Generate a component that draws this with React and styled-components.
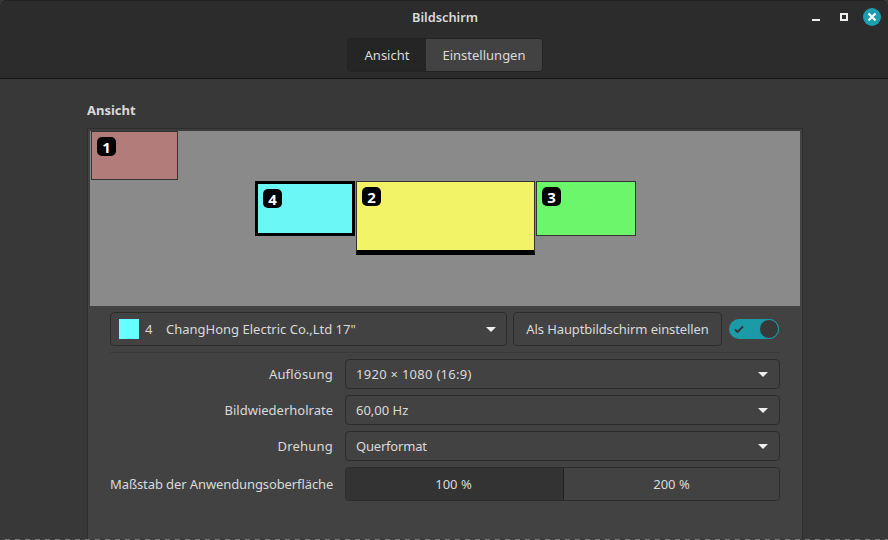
import React from 'react';
import styled, { createGlobalStyle } from 'styled-components';

const GlobalStyle = createGlobalStyle`
  html, body {
    margin: 0;
    padding: 0;
    background: #383838;
  }
  * {
    box-sizing: border-box;
  }
`;

const Window = styled.div`
  position: relative;
  width: 888px;
  height: 540px;
  overflow: hidden;
  display: flex;
  flex-direction: column;
  background: #383838;
  color: #dadada;
  font-family: 'Noto Sans', 'Open Sans', sans-serif;
  font-size: 13px;
`;

const Header = styled.header`
  position: relative;
  flex: none;
  height: 79px;
  display: flex;
  flex-direction: column;
  align-items: center;
  padding: 8px 0 0 2px;
  background: #2c2c2c;
  border-top: 1px solid #222;
  border-bottom: 1px solid #151515;
  border-radius: 7px 7px 0 0;
`;

const Title = styled.div`
  height: 16px;
  line-height: 16px;
  font-weight: 600;
  font-size: 12.8px;
`;

const StackSwitcher = styled.div`
  display: flex;
  height: 34px;
  margin-top: 13px;
  border: 1px solid #232323;
  border-radius: 4px;
  overflow: hidden;
`;

const StackTab = styled.div`
  display: flex;
  align-items: center;
  justify-content: center;
  width: ${({ width }) => width}px;
  background: ${({ active }) => (active ? '#252525' : '#424242')};
`;

const WindowControls = styled.div`
  position: absolute;
  top: 7px;
  right: 7px;
  display: flex;
  align-items: center;
  gap: 10px;
`;

const WindowButton = styled.div`
  width: 18px;
  height: 18px;
  display: flex;
  align-items: center;
  justify-content: center;
  border-radius: 50%;
  background: ${({ close }) => (close ? '#1b9fb0' : 'transparent')};
`;

const Body = styled.main`
  flex: 1;
  padding: 22px 85px 0 87px;
`;

const SectionTitle = styled.div`
  height: 18px;
  line-height: 18px;
  font-weight: 700;
  font-size: 13px;
  margin-bottom: 9px;
`;

const Frame = styled.div`
  height: 412px;
  border: 1px solid #2e2e2e;
  border-bottom: none;
  background: #424242;
  display: flex;
  flex-direction: column;
`;

const Preview = styled.div`
  position: relative;
  flex: none;
  height: 177px;
  margin: 0 2px;
  border-top: 2px solid #3c3c3c;
  background: #8a8a8a;
`;

const Monitor = styled.div`
  position: absolute;
  left: ${({ x }) => x}px;
  top: ${({ y }) => y}px;
  width: ${({ w }) => w}px;
  height: ${({ h }) => h}px;
  background: ${({ color }) => color};
  border: 1px solid #333;
  ${({ selected }) => selected && 'border: 3px solid #000;'}
  ${({ primary }) => primary && 'border-bottom: 5px solid #000;'}
`;

const Badge = styled.div`
  position: absolute;
  left: 5px;
  top: 5px;
  width: 19px;
  height: 19px;
  display: flex;
  align-items: center;
  justify-content: center;
  border-radius: 5px;
  background: #000;
  color: #fff;
  font-weight: 700;
  font-size: 15px;
`;

const Controls = styled.div`
  padding: 6px 22px 0;
`;

const TopRow = styled.div`
  display: flex;
  align-items: center;
  height: 34px;
`;

const ComboBase = styled.div`
  display: flex;
  align-items: center;
  justify-content: space-between;
  border: 1px solid #2c2c2c;
  border-radius: 4px;
  background: #424242;
`;

const MonitorCombo = styled(ComboBase)`
  width: 397px;
  height: 34px;
  padding: 0 10px 0 8px;
`;

const MonitorInfo = styled.div`
  display: flex;
  align-items: center;
`;

const Swatch = styled.div`
  width: 20px;
  height: 20px;
  background: #66ffff;
`;

const MonitorNumber = styled.span`
  margin-left: 6px;
  width: 21px;
`;

const Arrow = styled.div`
  width: 0;
  height: 0;
  border-left: 5px solid transparent;
  border-right: 5px solid transparent;
  border-top: 5px solid #eee;
`;

const PrimaryButton = styled.div`
  width: 209px;
  height: 34px;
  margin-left: 6px;
  display: flex;
  align-items: center;
  justify-content: center;
  border: 1px solid #2c2c2c;
  border-radius: 4px;
  letter-spacing: -0.1px;
`;

const Switch = styled.div`
  position: relative;
  width: 50px;
  height: 20px;
  margin-left: 7px;
  padding-left: 4px;
  display: flex;
  align-items: center;
  border-radius: 10px;
  background: #1b9aa8;
`;

const SwitchKnob = styled.div`
  position: absolute;
  right: 0;
  top: 0;
  width: 20px;
  height: 20px;
  border-radius: 50%;
  background: #383838;
  border: 1px solid #1b9aa8;
`;

const Separator = styled.div`
  height: 1px;
  margin: 6px 0;
  background: #3a3a3a;
`;

const SettingsGrid = styled.div`
  display: grid;
  grid-template-columns: 223px 435px;
  column-gap: 12px;
  row-gap: 6px;
  align-items: center;
`;

const Label = styled.div`
  text-align: right;
  white-space: nowrap;
  letter-spacing: ${({ tracking }) => tracking || 0}px;
`;

const SettingCombo = styled(ComboBase)`
  height: 30px;
  padding: 0 11px 0 10px;
`;

const SettingValue = styled.span`
  letter-spacing: ${({ tracking }) => tracking || 0}px;
`;

const ScaleGroup = styled.div`
  display: flex;
  height: 34px;
  border: 1px solid #2c2c2c;
  border-radius: 4px;
  overflow: hidden;
`;

const ScaleOption = styled.div`
  flex: 1;
  display: flex;
  align-items: center;
  justify-content: center;
  background: #424242;
`;

const ActiveScaleOption = styled(ScaleOption)`
  flex: none;
  width: 218px;
  padding-right: 2px;
  background: #333333;
  border-right: 1px solid #222;
`;

const BottomEdge = styled.div`
  position: absolute;
  left: 0;
  right: 0;
  bottom: 0;
  height: 1px;
  background: repeating-linear-gradient(90deg, #383838 0 5px, #777 5px 10px);
`;

const monitors = [
  { id: 1, x: 1, y: 0, w: 87, h: 49, color: '#b17c7a' },
  { id: 4, x: 165, y: 50, w: 100, h: 55, color: '#6bf7f5' },
  { id: 2, x: 266, y: 50, w: 179, h: 74, color: '#f3f368' },
  { id: 3, x: 446, y: 50, w: 100, h: 55, color: '#6bf66b' },
];

const settings = [
  { label: 'Auflösung', labelTracking: 0.2, value: '1920 × 1080 (16:9)', valueTracking: 0.28 },
  { label: 'Bildwiederholrate', value: '60,00 Hz' },
  { label: 'Drehung', labelTracking: 0.2, value: 'Querformat', valueTracking: -0.2 },
];

export default function App() {
  return (
    <Window>
      <GlobalStyle />
      <Header>
        <Title>Bildschirm</Title>
        <StackSwitcher>
          <StackTab width={78} active>Ansicht</StackTab>
          <StackTab width={116}>Einstellungen</StackTab>
        </StackSwitcher>
        <WindowControls>
          <WindowButton>
            <svg width="10" height="10" viewBox="0 0 10 10">
              <rect x="1" y="7" width="8" height="2" fill="#eee" />
            </svg>
          </WindowButton>
          <WindowButton>
            <svg width="10" height="10" viewBox="0 0 10 10">
              <rect x="2" y="2" width="6" height="6" fill="none" stroke="#eee" strokeWidth="2" />
            </svg>
          </WindowButton>
          <WindowButton close>
            <svg width="10" height="10" viewBox="0 0 10 10">
              <path d="M1.5 1.5 8.5 8.5M8.5 1.5 1.5 8.5" stroke="#fff" strokeWidth="2.2" />
            </svg>
          </WindowButton>
        </WindowControls>
      </Header>
      <Body>
        <SectionTitle>Ansicht</SectionTitle>
        <Frame>
          <Preview>
            {monitors.map((m) => (
              <Monitor key={m.id} {...m} selected={m.id === 4} primary={m.id === 2}>
                <Badge>{m.id}</Badge>
              </Monitor>
            ))}
          </Preview>
          <Controls>
            <TopRow>
              <MonitorCombo>
                <MonitorInfo>
                  <Swatch />
                  <MonitorNumber>4</MonitorNumber>
                  <span>ChangHong Electric Co.,Ltd 17"</span>
                </MonitorInfo>
                <Arrow />
              </MonitorCombo>
              <PrimaryButton>Als Hauptbildschirm einstellen</PrimaryButton>
              <Switch>
                <svg width="12" height="12" viewBox="0 0 12 12">
                  <path d="M2 6.5 4.5 9 10 3.5" fill="none" stroke="#333" strokeWidth="1.8" />
                </svg>
                <SwitchKnob />
              </Switch>
            </TopRow>
            <Separator />
            <SettingsGrid>
              {settings.map((s) => (
                <React.Fragment key={s.label}>
                  <Label tracking={s.labelTracking}>{s.label}</Label>
                  <SettingCombo>
                    <SettingValue tracking={s.valueTracking}>{s.value}</SettingValue>
                    <Arrow />
                  </SettingCombo>
                </React.Fragment>
              ))}
              <Label tracking={-0.1}>Maßstab der Anwendungsoberfläche</Label>
              <ScaleGroup>
                <ActiveScaleOption>100 %</ActiveScaleOption>
                <ScaleOption>200 %</ScaleOption>
              </ScaleGroup>
            </SettingsGrid>
          </Controls>
        </Frame>
      </Body>
      <BottomEdge />
    </Window>
  );
}
